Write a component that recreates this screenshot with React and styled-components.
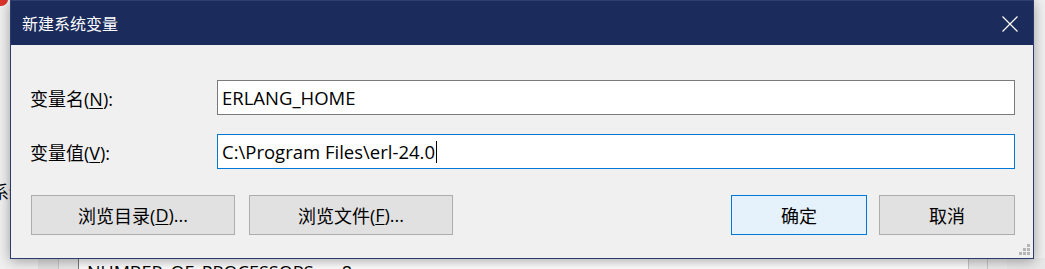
import styled, { createGlobalStyle } from "styled-components";

const GlobalStyle = createGlobalStyle`
  html, body {
    margin: 0;
    padding: 0;
    background: #f0f0f0;
    overflow: hidden;
  }
  * {
    box-sizing: border-box;
  }
`;

const font = `"Segoe UI", "Open Sans", "Noto Sans CJK SC", sans-serif`;

const Desktop = styled.div`
  position: relative;
  width: 1045px;
  height: 269px;
  overflow: hidden;
  background: #f0f0f0;
  font-family: ${font};
`;

const BackWindow = styled.div`
  display: flex;
  flex-direction: column;
  height: 100%;
`;

const RedMark = styled.div`
  position: absolute;
  left: -6px;
  top: -7px;
  width: 14px;
  height: 13px;
  border-radius: 50% 50% 50% 10%;
  background: #d9332b;
`;

const BackHeading = styled.div`
  margin: 178px 0 0 -9px;
  font-size: 18px;
  color: #000;
`;

const BackList = styled.div`
  margin: auto 0 0 38px;
  height: 11px;
  display: flex;
  background: #fff;
  width: 1007px;
`;

const BackCell = styled.div`
  width: ${(p) => p.w}px;
  flex: ${(p) => (p.w ? "none" : 1)};
  background: ${(p) => p.bg || "#fff"};
  border-left: 1px solid ${(p) => p.line || "#d0d0d0"};
  overflow: hidden;
  font-size: 18px;
  line-height: 28px;
  padding-left: 8px;
  white-space: pre;
  color: #000;
`;

const Dialog = styled.div`
  position: absolute;
  left: 10px;
  top: 0;
  width: 1024px;
  height: 259px;
  display: flex;
  flex-direction: column;
  background: #f0f0f0;
  border: 1px solid #2b3b70;
  border-top: none;
  box-shadow: 0 2px 12px rgba(0, 0, 0, 0.35);
`;

const TitleBar = styled.div`
  height: 45px;
  flex: none;
  display: flex;
  align-items: center;
  justify-content: space-between;
  padding: 0 15px 0 11px;
  background: #1b2b5b;
  border-top: 1px solid #2f3f72;
  color: #fff;
  font-size: 16px;
`;

const CloseButton = styled.div`
  width: 16px;
  height: 16px;
  display: flex;
  margin-top: 1px;
`;

const Body = styled.div`
  flex: 1;
  position: relative;
  display: flex;
  flex-direction: column;
  padding: 35px 18px 0 19px;
`;

const FieldGrid = styled.div`
  display: grid;
  grid-template-columns: 187px 1fr;
  row-gap: 19px;
  align-items: center;
`;

const Label = styled.label`
  font-size: 18px;
  color: #000;
`;

const Key = styled.span`
  text-decoration: underline;
  text-underline-offset: 2px;
  text-decoration-thickness: 1px;
`;

const Field = styled.div`
  height: 35px;
  display: flex;
  align-items: center;
  padding: 0 4px;
  background: #fff;
  border: 1px solid ${(p) => (p.focused ? "#0078d7" : "#7a7a7a")};
  font-size: 18.5px;
  color: #000;
  white-space: pre;
`;

const Caret = styled.span`
  display: inline-block;
  width: 1px;
  height: 22px;
  margin-left: 1px;
  background: #000;
`;

const ButtonRow = styled.div`
  display: flex;
  align-items: center;
  gap: 14px;
  margin: 26px 0 0 1px;
`;

const Spacer = styled.div`
  flex: 1;
`;

const Button = styled.div`
  width: ${(p) => p.w}px;
  height: 40px;
  display: flex;
  align-items: center;
  justify-content: center;
  background: ${(p) => (p.primary ? "#e5f1fb" : "#e1e1e1")};
  border: 1px solid ${(p) => (p.primary ? "#0078d7" : "#adadad")};
  font-size: 18px;
  color: #000;
  margin-left: ${(p) => p.ml || 0}px;
`;

const Grip = styled.svg`
  position: absolute;
  right: 2px;
  bottom: 2px;
`;

export default function App() {
  return (
    <Desktop>
      <GlobalStyle />
      <BackWindow>
        <BackHeading>系统变量(S)</BackHeading>
        <BackList>
          <BackCell w={20} bg="#e3e3e3" line="#e3e3e3" />
          <BackCell w={20} bg="#ebebeb" line="#c8c8c8" />
          <BackCell line="#7a7a7a">NUMBER_OF_PROCESSORS      8</BackCell>
          <BackCell w={19} bg="#ececec" line="#c8c8c8" />
          <BackCell w={20} bg="#ececec" line="#c8c8c8" />
          <BackCell w={38} bg="#e8e8e8" line="#e8e8e8" />
        </BackList>
      </BackWindow>
      <RedMark />
      <Dialog>
        <TitleBar>
          <span>新建系统变量</span>
          <CloseButton>
            <svg width="16" height="16" viewBox="0 0 16 16">
              <path d="M0.5 0.5 L15.5 15.5 M15.5 0.5 L0.5 15.5" stroke="#fff" strokeWidth="1.2" />
            </svg>
          </CloseButton>
        </TitleBar>
        <Body>
          <FieldGrid>
            <Label>
              变量名(<Key>N</Key>):
            </Label>
            <Field>ERLANG_HOME</Field>
            <Label>
              变量值(<Key>V</Key>):
            </Label>
            <Field focused>
              C:\Program Files\erl-24.0
              <Caret />
            </Field>
          </FieldGrid>
          <ButtonRow>
            <Button w={204}>
              浏览目录(<Key>D</Key>)...
            </Button>
            <Button w={204}>
              浏览文件(<Key>F</Key>)...
            </Button>
            <Spacer />
            <Button w={136} primary>
              确定
            </Button>
            <Button w={136} ml={-2}>
              取消
            </Button>
          </ButtonRow>
          <Grip width="12" height="12" viewBox="0 0 12 12">
            <g fill="#b5b5b5">
              <rect x="8" y="0" width="3" height="3" />
              <rect x="4" y="4" width="3" height="3" />
              <rect x="8" y="4" width="3" height="3" />
              <rect x="0" y="8" width="3" height="3" />
              <rect x="4" y="8" width="3" height="3" />
              <rect x="8" y="8" width="3" height="3" />
            </g>
          </Grip>
        </Body>
      </Dialog>
    </Desktop>
  );
}
